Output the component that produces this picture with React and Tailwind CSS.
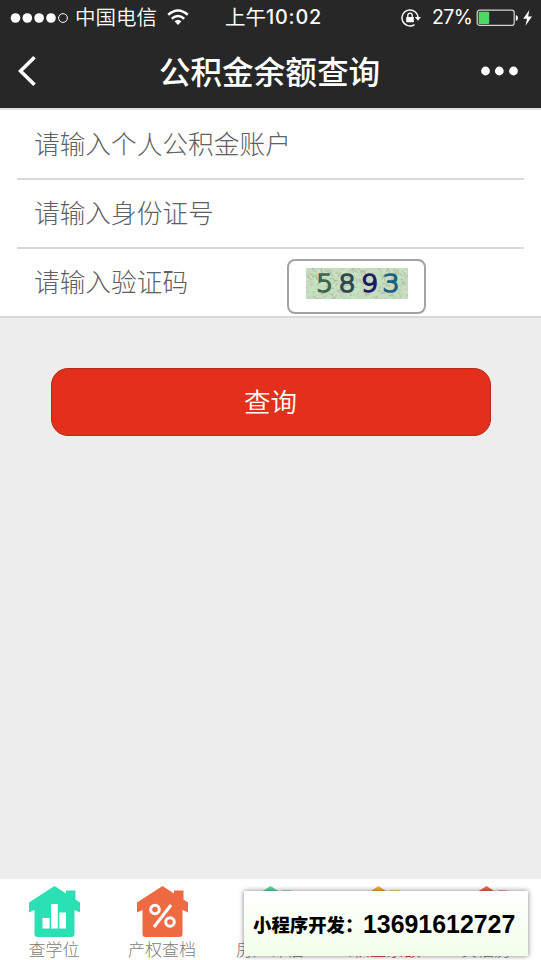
import React from 'react';

const HOUSE = 'M25.5 0 L37 7.6 V4.6 H46.5 V13.5 L51 16.5 V26.5 L45.5 24 V48 Q45.5 51 42.5 51 H8.5 Q5.5 51 5.5 48 V24 L0 26.5 V16.5 Z';

function House({ color, children }) {
  return (
    <svg width="51" height="51" viewBox="0 0 51 51" className="block">
      <path d={HOUSE} fill={color} />
      {children}
    </svg>
  );
}

function Tab({ color, label, active, children }) {
  return (
    <div className="flex w-[108px] flex-none flex-col items-center pt-[7px]">
      <House color={color}>{children}</House>
      <span className={`mt-[2px] whitespace-nowrap text-[17px] leading-[20px] ${active ? 'text-[#e2301c]' : 'text-[#7c7c7c]'}`}>{label}</span>
    </div>
  );
}

function StatusBar() {
  return (
    <div className="relative flex h-[35px] items-center text-[20px] text-white">
      <svg width="60" height="12" viewBox="0 0 60 12" className="ml-[10px]">
        <g fill="#fff">
          <circle cx="5.5" cy="6" r="4.8" />
          <circle cx="17.3" cy="6" r="4.8" />
          <circle cx="29.1" cy="6" r="4.8" />
          <circle cx="41" cy="6" r="4.8" />
        </g>
        <circle cx="53" cy="6" r="4.4" fill="none" stroke="#fff" />
      </svg>
      <span className="mb-[2px] ml-[5px] w-[82px] whitespace-nowrap text-[20.5px] font-[350] leading-[33px]">中国电信</span>
      <svg width="22" height="17" viewBox="0 0 22 17" className="ml-[10px]">
        <g fill="none" stroke="#fff" strokeWidth="2.5">
          <path d="M1.2 5.8 Q11 -2.8 20.8 5.8" />
          <path d="M4.8 9.7 Q11 4.3 17.2 9.7" />
        </g>
        <path d="M7.5 12.3 Q11 9.2 14.5 12.3 L11 16 Z" fill="#fff" />
      </svg>
      <span className="ml-[36px] flex w-[98px] whitespace-nowrap leading-[35px]">
        <span className="-mt-px text-[20.5px]">上午</span>
        <span className="font-['Inter'] text-[19.8px] font-medium tracking-[0.8px]">10:02</span>
      </span>
      <svg width="20" height="18" viewBox="0 0 20 18" className="ml-[78px]">
        <path d="M17 9 A8 8 0 1 0 13.5 15.6" fill="none" stroke="#fff" strokeWidth="1.4" />
        <path d="M13.8 8 H20 L17 11.7 Z" fill="#fff" />
        <rect x="5.2" y="8" width="7.6" height="5.3" rx=".6" fill="#fff" />
        <path d="M6.8 8 V6.3 A2.2 2.2 0 0 1 11.2 6.3 V8" fill="none" stroke="#fff" strokeWidth="1.3" />
      </svg>
      <span className="ml-[11px] w-[40px] whitespace-nowrap font-['Inter'] text-[19.5px] leading-[35px] tracking-[-0.6px]">27%</span>
      <svg width="58" height="18" viewBox="0 0 58 18" className="ml-[4px]">
        <rect x="1.2" y="1.2" width="37" height="15.2" rx="2.5" fill="none" stroke="#d5d5d5" strokeWidth="1.2" />
        <rect x="2.7" y="2.7" width="10.5" height="12.3" rx="1" fill="#4cd964" />
        <path d="M39.8 6 Q42 6.3 42 9 Q42 11.7 39.8 12 Z" fill="#fff" />
        <path d="M53.3 1 L47.2 9.7 H51 L49.5 16.8 L56 7.6 H52.2 Z" fill="#fff" />
      </svg>
    </div>
  );
}

function Captcha() {
  const scratches = Array.from({ length: 230 }, (_, i) => {
    const x = (i * 37.7) % 101;
    const y = (i * 17.3) % 31;
    return `M${x.toFixed(1)} ${y.toFixed(1)}l${(((i * 7) % 11) - 5)} ${(((i * 5) % 9) - 4)}`;
  });
  return (
    <svg width="102" height="31" viewBox="0 0 102 31" className="block overflow-hidden">
      <rect width="102" height="31" fill="#c5dcbe" />
      <g strokeWidth=".9" fill="none">
        <path d={scratches.filter((_, i) => i % 3 === 0).join('')} stroke="#a3b59b" />
        <path d={scratches.filter((_, i) => i % 3 === 1).join('')} stroke="#c4f5c4" />
        <path d={scratches.filter((_, i) => i % 3 === 2).join('')} stroke="#b4b9ad" />
      </g>
      <g fontFamily="DejaVu Sans" fontSize="25" strokeWidth="1.6" textAnchor="middle">
        <text transform="translate(18.5 23.5) scale(1.08 1)" fill="#3f6548" stroke="#3f6548">5</text>
        <text transform="translate(41 23.5) scale(1.08 1)" fill="#304650" stroke="#304650">8</text>
        <text transform="translate(63.5 23.5) scale(1.08 1)" fill="#211763" stroke="#211763">9</text>
        <text transform="translate(85 23.5) scale(1.08 1)" fill="#205f82" stroke="#205f82">3</text>
      </g>
    </svg>
  );
}

export default function App() {
  return (
    <div className="relative flex h-[960px] w-[541px] flex-col overflow-hidden bg-[#ededed] font-['Noto_Sans_CJK_SC',sans-serif]">
      <header className="h-[108px] bg-[#272727] text-white">
        <StatusBar />
        <div className="flex h-[71px] items-center justify-between pl-[18px] pr-[23px]">
          <svg width="20" height="32" viewBox="0 0 20 32">
            <path d="M16.5 2.3 L2.5 16 L16.5 29.7" fill="none" stroke="#fff" strokeWidth="3.6" />
          </svg>
          <h1 className="-mt-px ml-[20px] text-[31.6px] font-medium leading-[70px]">公积金余额查询</h1>
          <svg width="37" height="10" viewBox="0 0 37 10" fill="#fff">
            <circle cx="4.5" cy="5" r="4.4" />
            <circle cx="18.3" cy="5" r="4.4" />
            <circle cx="32.5" cy="5" r="4.4" />
          </svg>
        </div>
      </header>
      <form className="h-[210px] border-b-2 border-t-2 border-b-[#d9d9d9] border-t-[#e0e0e0] bg-white px-[17px] text-[25.7px] font-light text-[#606060]">
        <div className="h-[70px] border-b-2 border-[#d9d9d9] pl-[17px] leading-[65px]">请输入个人公积金账户</div>
        <div className="h-[69px] border-b-2 border-[#d9d9d9] pl-[17px] leading-[63px]">请输入身份证号</div>
        <div className="flex h-[67px] pl-[17px]">
          <span className="w-[253px] leading-[64px]">请输入验证码</span>
          <div className="mt-[10px] flex h-[55px] w-[139px] justify-center rounded-[8px] border-2 border-[#a3a3a3] pt-[7px]">
            <Captcha />
          </div>
        </div>
      </form>
      <button type="button" className="mx-auto mt-[50px] h-[68px] w-[440px] rounded-[17px] border border-[#b92a1a] bg-[#e2301c] pb-[3px] text-[26.5px] font-[350] leading-[62px] text-white">查询</button>
      <nav className="mt-auto flex h-[81px] bg-white font-light">
        <Tab color="#2ce0b5" label="查学位">
          <path d="M13.5 32 H20.5 V42.5 H13.5 Z M22 18 H28.8 V42.5 H22 Z M30.3 26.5 H37 V42.5 H30.3 Z" fill="#fff" />
        </Tab>
        <Tab color="#ee6a42" label="产权查档">
          <g fill="none" stroke="#fff" strokeWidth="3">
            <circle cx="18" cy="23.5" r="4.3" />
            <circle cx="33" cy="36" r="4.3" />
            <path d="M34 19 L17 41" />
          </g>
        </Tab>
        <Tab color="#55d99d" label="房产评估" />
        <Tab color="#f5a941" label="公积金余额" active />
        <Tab color="#e96849" label="贷估房" />
      </nav>
      <div className="absolute left-[244px] top-[891px] flex h-[65px] w-[284px] items-center whitespace-nowrap bg-gradient-to-b from-white to-[#f2ffe9] pl-[9px] pt-[3px] text-black shadow-[0_0_5px_rgba(0,0,0,0.5)]">
        <span className="w-[110px] text-[18.4px] font-black">小程序开发：</span>
        <span className="font-['Liberation_Sans',sans-serif] text-[24.9px] font-bold">13691612727</span>
      </div>
    </div>
  );
}
